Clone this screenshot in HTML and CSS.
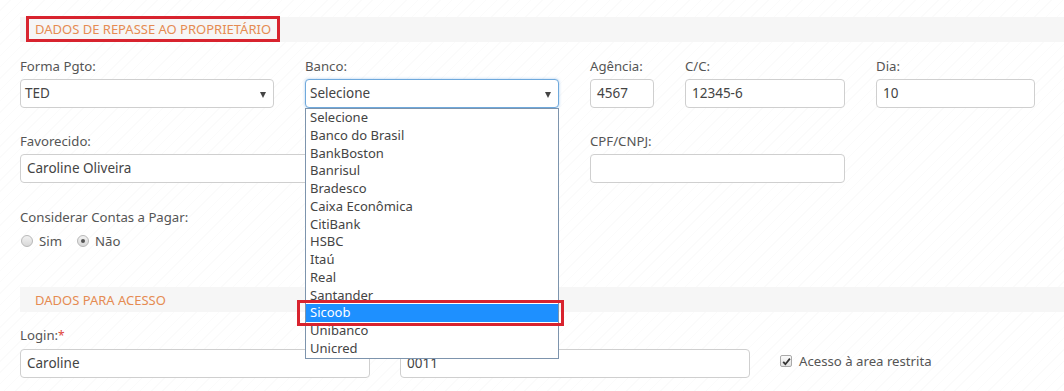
FILE: index.html
```html
<!DOCTYPE html>
<html lang="pt-BR">
<head>
<meta charset="utf-8">
<title>Dados de repasse</title>
<link rel="stylesheet" href="styles.css">
</head>
<body>
<div class="page">
  <div class="section-head first">
    <span class="section-title marked">DADOS DE REPASSE AO PROPRIETÁRIO</span>
  </div>

  <div class="row r1">
    <div class="field w254">
      <label class="lbl">Forma Pgto:</label>
      <div class="select">TED<span class="caret"></span></div>
    </div>
    <div class="field w254 banco">
      <label class="lbl">Banco:</label>
      <div class="select focus">Selecione<span class="caret"></span></div>
      <ul class="dropdown">
        <li>Selecione</li>
        <li>Banco do Brasil</li>
        <li>BankBoston</li>
        <li>Banrisul</li>
        <li>Bradesco</li>
        <li>Caixa Econômica</li>
        <li>CitiBank</li>
        <li>HSBC</li>
        <li>Itaú</li>
        <li>Real</li>
        <li>Santander</li>
        <li class="active">Sicoob</li>
        <li>Unibanco</li>
        <li>Unicred</li>
      </ul>
    </div>
    <div class="field w64">
      <label class="lbl">Agência:</label>
      <div class="input">4567</div>
    </div>
    <div class="field w160">
      <label class="lbl">C/C:</label>
      <div class="input">12345-6</div>
    </div>
    <div class="field w159">
      <label class="lbl">Dia:</label>
      <div class="input">10</div>
    </div>
  </div>

  <div class="row r2">
    <div class="field w539">
      <label class="lbl">Favorecido:</label>
      <div class="input">Caroline Oliveira</div>
    </div>
    <div class="field w255">
      <label class="lbl">CPF/CNPJ:</label>
      <div class="input"></div>
    </div>
  </div>

  <div class="row r3">
    <div class="field">
      <label class="lbl">Considerar Contas a Pagar:</label>
      <div class="radios">
        <span class="radio"></span><span class="rtext">Sim</span>
        <span class="radio checked"></span><span class="rtext">Não</span>
      </div>
    </div>
  </div>

  <div class="section-head second">
    <span class="section-title">DADOS PARA ACESSO</span>
  </div>

  <div class="row r4">
    <div class="field w350">
      <label class="lbl">Login:<span class="req">*</span></label>
      <div class="input">Caroline</div>
    </div>
    <div class="field w350">
      <label class="lbl">Senha:<span class="req">*</span></label>
      <div class="input">0011</div>
    </div>
    <div class="check">
      <span class="box"><svg width="9" height="9" viewBox="0 0 9 9"><path d="M1.2 4.8 L3.4 7.2 L7.9 1.6" fill="none" stroke="#333" stroke-width="1.8"/></svg></span>
      <span class="ctext">Acesso à area restrita</span>
    </div>
  </div>
</div>
</body>
</html>
```

FILE: styles.css
```css
* { box-sizing: border-box; }
html, body { margin: 0; padding: 0; }
body {
  font-family: "Noto Sans", "Open Sans", sans-serif;
  font-size: 13px;
  color: #555;
  background: #fff repeating-linear-gradient(135deg, #fff 0 7px, #fbfbfb 7px 8px);
  width: 1064px;
  height: 391px;
  overflow: hidden;
}
.page {
  padding-left: 20px;
  padding-top: 17px;
}
.section-head {
  background: #f6f6f6;
  height: 25px;
  display: flex;
  align-items: center;
  padding-left: 15px;
}
.section-head.first { padding-left: 6px; }
.section-title {
  color: #e58b52;
  font-size: 13px;
  line-height: 20px;
}
.section-title.marked {
  border: 3px solid #d8232e;
  padding: 0 6px;
  height: 26px;
  margin-top: -1px;
  display: inline-flex;
  align-items: center;
}
.second { margin-top: 37px; }

.row {
  display: flex;
  gap: 31px;
  align-items: flex-start;
}
.r1 { margin-top: 15px; }
.r2 { margin-top: 24px; }
.r3 { margin-top: 25px; }
.r4 { margin-top: 14px; gap: 30px; }

.field { display: flex; flex-direction: column; }
.lbl { line-height: 18px; height: 18px; margin-bottom: 4px; display: block; color: #555; font-size: 13.2px; }
.r4 .lbl { margin-bottom: 5px; }
.req { color: #e0443a; font-size: 12px; }
.w254 { width: 254px; }
.w64 { width: 64px; }
.w160 { width: 160px; }
.w159 { width: 159px; }
.w539 { width: 539px; }
.w255 { width: 255px; }
.w350 { width: 350px; }

.input, .select {
  height: 29px;
  border: 1px solid #cfcfcf;
  border-radius: 4px;
  background: #fff;
  padding: 0 6px;
  line-height: 27px;
  color: #444;
  font-size: 13.5px;
  white-space: nowrap;
  overflow: hidden;
}
.select {
  position: relative;
  padding-left: 4px;
}
.select.focus {
  border-color: #6fa9dc;
  box-shadow: 0 0 3px rgba(102, 160, 220, 0.55);
}
.caret {
  position: absolute;
  right: 7px;
  top: 12px;
  width: 0;
  height: 0;
  border-left: 3.5px solid transparent;
  border-right: 3.5px solid transparent;
  border-top: 6px solid #444;
}
.banco { position: relative; }
.dropdown {
  position: absolute;
  left: 0;
  top: 51px;
  width: 254px;
  margin: 0;
  padding: 0;
  list-style: none;
  background: #fff;
  border: 1px solid #7d94ad;
  z-index: 5;
}
.dropdown li {
  height: 17.75px;
  line-height: 17.75px;
  padding-left: 4px;
  color: #444;
  white-space: nowrap;
}
.dropdown li.active {
  background: #1e90ff;
  color: #fff;
  position: relative;
}
.dropdown li.active::after {
  content: "";
  position: absolute;
  left: -9px;
  right: -6px;
  top: -4px;
  bottom: -4px;
  border: 3px solid #d8232e;
}

.radios { display: flex; align-items: center; height: 18px; margin-top: 2px; }
.radio {
  width: 12px;
  height: 12px;
  border-radius: 50%;
  border: 1px solid #b8b8b8;
  background: linear-gradient(#f2f2f2, #d8d8d8);
  margin-left: 1px;
  margin-right: 6px;
  position: relative;
}
.radio.checked::after {
  content: "";
  position: absolute;
  left: 3px;
  top: 3px;
  width: 4px;
  height: 4px;
  border-radius: 50%;
  background: #555;
}
.rtext { margin-right: 14px; color: #555; font-size: 13.2px; }

.check {
  display: flex;
  align-items: center;
  margin-top: 26px;
  height: 18px;
}
.box {
  width: 12px;
  height: 12px;
  border: 1px solid #aaa;
  border-radius: 2px;
  background: linear-gradient(#fafafa, #e2e2e2);
  display: inline-flex;
  align-items: center;
  justify-content: center;
  margin-right: 7px;
}
.box svg { display: block; }
.ctext { color: #555; font-size: 13.2px; }
```
